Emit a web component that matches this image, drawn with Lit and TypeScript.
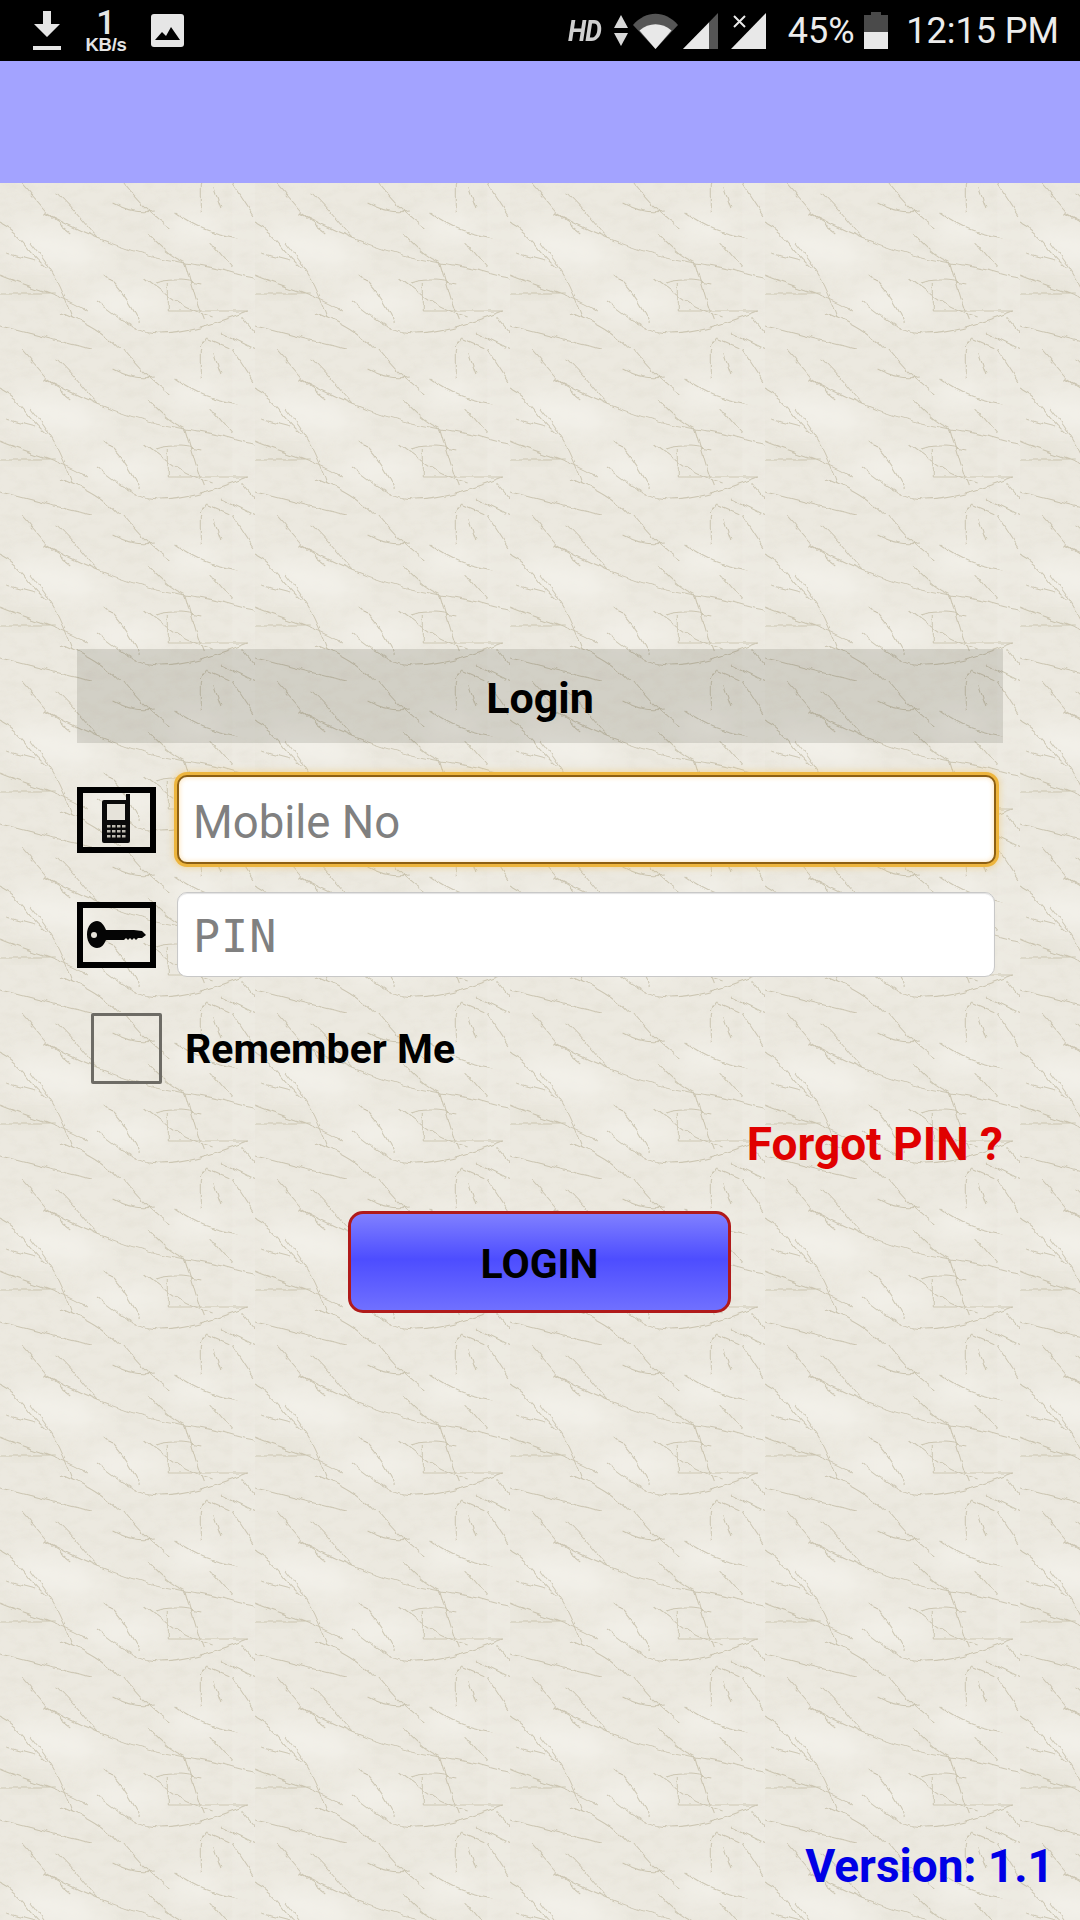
import { LitElement, html, css, svg, unsafeCSS } from "lit";
import { customElement } from "lit/decorators.js";

const creases = [
  "M43 30C90 55 130 72 180 80S225 92 247 95",
  "M143 50C155 62 165 74 180 80",
  "M180 80C186 100 190 120 197 137",
  "M0 110H53M0 92C30 105 60 112 85 128",
  "M0 143C30 150 60 160 90 166M20 0L45 30L70 50",
  "M93 118C115 135 130 150 155 150S210 140 240 128",
  "M163 128H240M163 100V128",
  "M55 10C75 30 85 45 95 55M120 0C140 25 150 35 165 45",
  "M30 60C50 85 60 105 70 135M140 95C165 115 175 125 205 135",
  "M0 40C20 50 28 70 45 85M100 90C112 100 125 115 135 140",
  "M60 130C80 140 95 145 115 166M110 20C125 28 135 30 150 28M5 70L35 78",
  "M170 30C190 45 205 50 230 55M205 60L225 85M150 100C165 95 180 97 195 100",
];
const marks = [
  "M200 155L194 166M200 155L225 166M215 150L247 166M235 135L247 150",
  "M200 -11L194 0M200 -11L225 0M194 0V30M225 0L245 32M207 5L214 25",
];
const tile = `<svg xmlns="http://www.w3.org/2000/svg" width="255" height="166" viewBox="0 0 247 166" preserveAspectRatio="none">
<defs>
<filter id="b" x="-30%" y="-30%" width="160%" height="160%"><feGaussianBlur stdDeviation="11"/></filter>
<filter id="s" x="-5%" y="-5%" width="110%" height="110%"><feTurbulence type="fractalNoise" baseFrequency="0.07" numOctaves="3" seed="4" result="t"/><feDisplacementMap in="SourceGraphic" in2="t" scale="6" xChannelSelector="R" yChannelSelector="G"/><feGaussianBlur stdDeviation="0.7"/></filter>
<filter id="n" x="0" y="0" width="100%" height="100%"><feTurbulence type="fractalNoise" baseFrequency="0.06 0.1" numOctaves="5" seed="8" stitchTiles="stitch"/><feColorMatrix values="0 0 0 0 0.62 0 0 0 0 0.59 0 0 0 0 0.48 0.9 0 0 0 -0.36"/></filter>
</defs>
<rect width="247" height="166" fill="#ece9e0"/>
<rect width="247" height="166" filter="url(#n)" opacity="0.35"/>
<g filter="url(#b)" fill="#f3f1ea">
<ellipse cx="55" cy="65" rx="48" ry="17" transform="rotate(15 55 65)"/>
<ellipse cx="120" cy="120" rx="40" ry="14"/>
<ellipse cx="190" cy="45" rx="26" ry="15"/>
</g>
<g filter="url(#b)" fill="#e4e1d5">
<ellipse cx="25" cy="105" rx="24" ry="8"/>
</g>
<rect x="225" y="0" width="22" height="166" fill="#fff" opacity="0.08"/>
<g filter="url(#s)" fill="none" stroke="#a89f80" stroke-width="1" opacity="0.48">
${creases.map((d) => `<path d="${d}"/>`).join("")}
${marks.map((d) => `<path d="${d}"/>`).join("")}
</g>
</svg>`;
const tileUrl = unsafeCSS(`url("data:image/svg+xml,${encodeURIComponent(tile)}")`);

@customElement("app-root")
export class AppRoot extends LitElement {
  static styles = css`
    :host {
      display: block;
      width: 1080px;
      height: 1920px;
      font-family: Roboto, "Liberation Sans", sans-serif;
    }
    .app {
      display: flex;
      flex-direction: column;
      height: 1920px;
    }
    .status {
      height: 61px;
      flex: none;
      background: #000;
      color: #ececec;
      display: flex;
      align-items: center;
    }
    .status svg {
      display: block;
      flex: none;
    }
    .left {
      display: flex;
      align-items: center;
      padding-left: 32px;
    }
    .speed {
      display: flex;
      flex-direction: column;
      align-items: center;
      width: 44px;
      margin-left: 22px;
      margin-right: 23px;
      font-family: "Liberation Sans", sans-serif;
      font-weight: 700;
      color: #e4e4e4;
    }
    .speed b {
      font-family: Roboto, sans-serif;
      font-size: 34px;
      line-height: 28px;
      font-weight: 500;
    }
    .speed span {
      font-size: 18.5px;
      line-height: 18px;
      letter-spacing: -0.3px;
    }
    .right {
      margin-left: auto;
      display: flex;
      align-items: center;
      padding-right: 21px;
    }
    .hd {
      font: italic 700 30px/1 Roboto, sans-serif;
      color: #cfcfcf;
      width: 37px;
      margin-right: 9px;
      letter-spacing: -1px;
      transform: scaleX(0.88);
      transform-origin: left center;
      white-space: nowrap;
    }
    .pct {
      font-size: 36px;
      line-height: 1;
      width: 67px;
      margin-left: 22px;
      margin-right: 9px;
      white-space: nowrap;
    }
    .time {
      font-size: 36px;
      line-height: 1;
      margin-left: 18.500px;
      white-space: nowrap;
    }
    .header {
      height: 122px;
      flex: none;
      background: #a3a3ff;
    }
    .page {
      flex: 1;
      display: flex;
      flex-direction: column;
      background-color: #ece9e0;
      background-image: ${tileUrl};
      background-size: 255px 166px;
      padding: 466px 0 0 77px;
      box-sizing: border-box;
    }
    .title {
      width: 926px;
      height: 94px;
      box-sizing: border-box;
      padding-top: 3px;
      background: rgba(60, 55, 40, 0.14);
      display: flex;
      align-items: center;
      justify-content: center;
      font-size: 43px;
      font-weight: 700;
      color: #000;
    }
    .row {
      display: flex;
      align-items: center;
      gap: 21px;
    }
    .row.mobile {
      margin-top: 32px;
    }
    .row.pin {
      margin-top: 28px;
    }
    .ico {
      width: 79px;
      height: 66px;
      box-sizing: border-box;
      border: 6px solid #000;
      flex: none;
    }
    .ico svg {
      display: block;
      filter: blur(0.5px);
    }
    input.field {
      box-sizing: border-box;
      width: 818px;
      height: 85px;
      border: 1px solid #c8c8c8;
      border-radius: 10px;
      background: #fff;
      padding: 4px 17px 0 15px;
      margin: 0;
      outline: none;
      font-family: Roboto, sans-serif;
      font-size: 45.500px;
      color: #000;
      box-shadow: inset 0 1px 1px rgba(0, 0, 0, 0.12);
    }
    input.field::placeholder {
      color: #808080;
      opacity: 1;
    }
    input.focus {
      width: 819px;
      height: 89px;
      border: 2px solid #8d5f12;
      box-shadow: 0 0 0 3px #edb53e, 0 0 6px 4px rgba(240, 190, 90, 0.45),
        inset 0 0 4px 1px rgba(250, 190, 90, 0.35);
      padding: 6px 17px 0 14px;
    }
    input.mono {
      font-family: "DejaVu Sans Mono", monospace;
      font-size: 45px;
      letter-spacing: 1px;
    }
    .remember {
      display: flex;
      align-items: center;
      margin-top: 36px;
      padding-left: 14px;
    }
    .check {
      appearance: none;
      margin: 0;
      width: 71px;
      height: 71px;
      box-sizing: border-box;
      border: 3px solid #6d6b65;
      border-radius: 2px;
      background: transparent;
    }
    .remember label {
      margin-left: 23px;
      padding-top: 2px;
      font-size: 41px;
      font-weight: 700;
      color: #000;
      line-height: 1;
    }
    .forgot {
      width: 926px;
      margin-top: 35px;
      text-align: right;
      font-size: 46px;
      line-height: 50px;
      font-weight: 700;
      color: #e00000;
    }
    .login {
      align-self: flex-start;
      margin: 42px 0 0 271px;
      width: 383px;
      height: 102px;
      box-sizing: border-box;
      border: 3px solid #b01a1a;
      border-radius: 15px;
      background: linear-gradient(#8080ff, #4d4dff 47%, #7070ff);
      font-family: Roboto, sans-serif;
      font-size: 41px;
      font-weight: 700;
      color: #000;
      padding: 3px 0 0;
    }
    .version {
      margin-top: auto;
      padding: 0 26px 28px 0;
      text-align: right;
      font-size: 46px;
      line-height: 52px;
      font-weight: 700;
      color: #0000e6;
    }
  `;

  render() {
    return html`
      <div class="app">
        <div class="status">
          <div class="left">
            <svg width="30" height="40" viewBox="0 0 30 40">
              <path d="M11 0h8v13h9L15 26 2 13h9zM1 35h28v4H1z" fill="#e6e6e6" />
            </svg>
            <div class="speed"><b>1</b><span>KB/s</span></div>
            <svg width="33" height="33" viewBox="0 0 33 33">
              <rect width="33" height="33" rx="3" fill="#e6e6e6" />
              <path d="M4 26l7-8 4 4 5-9 9 13z" fill="#000" />
            </svg>
          </div>
          <div class="right">
            <span class="hd">HD</span>
            <svg width="14" height="31" viewBox="0 0 14 31">
              <path d="M7 0l7 13H0z" fill="#d8d8d8" />
              <path d="M0 18h14L7 31z" fill="#d8d8d8" />
            </svg>
            <svg style="margin-left:5px" width="45" height="36" viewBox="0 0 45 36">
              <path d="M0 12C13 -3 32 -3 45 12L22.500 36z" fill="#555" />
              <path d="M6.500 17.500C16 9 29 9 38.500 17.500L22.500 36z" fill="#e8e8e8" />
            </svg>
            <svg style="margin-left:5px" width="35" height="36" viewBox="0 0 35 36">
              <path d="M0 36L35 0V36z" fill="#555" />
              <path d="M0 36L26 9.500V36z" fill="#e8e8e8" />
            </svg>
            <svg style="margin-left:13px" width="35" height="36" viewBox="0 0 35 36">
              <path d="M0 36L35 0V36z" fill="#e8e8e8" />
              <path d="M3 3l11 11M14 3L3 14" stroke="#e8e8e8" stroke-width="2" fill="none" />
            </svg>
            <span class="pct">45%</span>
            <svg width="24" height="37" viewBox="0 0 24 37">
              <path d="M7 0h10v3h7v34H0V3h7z" fill="#4a4a4a" />
              <path d="M0 20h24v17H0z" fill="#e8e8e8" />
            </svg>
            <span class="time">12:15 PM</span>
          </div>
        </div>
        <div class="header"></div>
        <div class="page">
          <div class="title">Login</div>
          <div class="row mobile">
            <div class="ico">
              <svg width="67" height="54" viewBox="1 1 67 54">
                <path
                  d="M20 10a2 2 0 0 1 2-2h22V2h4v47a2 2 0 0 1-2 2H22a2 2 0 0 1-2-2z"
                  fill="#0a0a0a"
                />
                <rect x="25" y="12" width="18" height="16" fill="#e6e3da" />
                ${[0, 1, 2].map((r) =>
                  [0, 1, 2, 3].map(
                    (c) =>
                      svg`<rect x=${25 + c * 5} y=${33 + r * 5} width="3.500" height="2.500" fill="#bdbab0" />`
                  )
                )}
              </svg>
            </div>
            <input class="field focus" placeholder="Mobile No" />
          </div>
          <div class="row pin">
            <div class="ico">
              <svg width="67" height="54" viewBox="1 1 67 54">
                <path
                  d="M5 27.500C5 19 10 14 15 14C19 14 22 18 24 23H52L60 24L64 28L60 31L56 31L54 33L52 31L50 33L48 31L46 33L44 31L42 33H24C22 38 19 41 15 41C10 41 5 36 5 27.500z"
                  fill="#050505"
                />
                <circle cx="12" cy="28" r="3" fill="#e6e3da" />
              </svg>
            </div>
            <input class="field mono" placeholder="PIN" />
          </div>
          <div class="remember">
            <input class="check" type="checkbox" id="rem" />
            <label for="rem">Remember Me</label>
          </div>
          <div class="forgot">Forgot PIN ?</div>
          <button class="login">LOGIN</button>
          <div class="version">Version: 1.1</div>
        </div>
      </div>
    `;
  }
}
